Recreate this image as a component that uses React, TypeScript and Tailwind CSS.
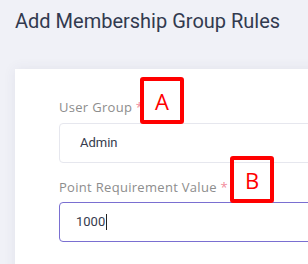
import React from 'react';

function Marker({ letter, className }: { letter: string; className: string }) {
  return (
    <div
      className={`absolute flex h-[47px] w-[44px] items-center justify-center rounded-[3px] border-[4px] border-[#ff0000] text-[22px] leading-none text-[#ff0000] ${className}`}
      style={{ fontFamily: '"Open Sans", sans-serif' }}
    >
      {letter}
    </div>
  );
}

export default function App() {
  return (
    <div className="h-[264px] w-[308px] overflow-hidden bg-[#f0f1f7]">
      <h1
        className="whitespace-nowrap px-[15px] pt-[9px] text-[20px] leading-[24px] text-[#323a4f]"
        style={{ fontFamily: 'Roboto, "Liberation Sans", sans-serif' }}
      >
        Add Membership Group Rules
      </h1>

      <div
        className="ml-[15px] mt-[36px] h-[220px] w-[400px] bg-white pl-[44px] pt-[28px] shadow-[0_0_12px_rgba(60,64,100,0.08)]"
        style={{ fontFamily: '"Open Sans", sans-serif' }}
      >
        <div className="relative">
          <label className="block text-[13px] leading-[20px] tracking-[0.3px] text-[#8d8d8d]">
            User Group <span className="text-[#f28b9b]">*</span>
          </label>
          <Marker letter="A" className="left-[81px] top-[-20px]" />
        </div>
        <div
          className="mt-[6px] flex h-[40px] items-center rounded-[4px] border border-[#e6e7ee] pl-[20px] text-[13px] text-[#353b4d]"
          style={{ fontFamily: 'Roboto, "Liberation Sans", sans-serif' }}
        >
          Admin
        </div>

        <div className="relative mt-[14px]">
          <label className="block text-[13px] leading-[20px] tracking-[0.3px] text-[#8d8d8d]">
            Point Requirement Value <span className="text-[#f28b9b]">*</span>
          </label>
          <Marker letter="B" className="left-[171px] top-[-21px]" />
        </div>
        <div
          className="mt-[5px] flex h-[40px] items-center rounded-[4px] border border-[#7a6fd1] pl-[16px] text-[13px] text-[#353b4d]"
          style={{ fontFamily: 'Roboto, "Liberation Sans", sans-serif' }}
        >
          1000<span className="ml-[1px] inline-block h-[16px] w-px bg-[#222]" />
        </div>
      </div>
    </div>
  );
}
